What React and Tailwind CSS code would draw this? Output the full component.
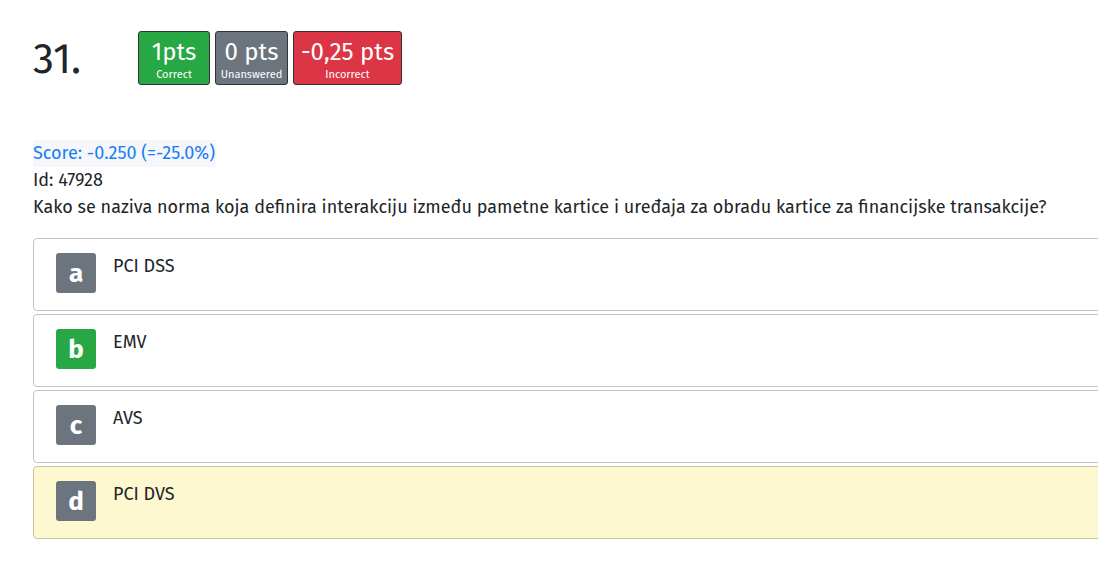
const options = [
  { key: "a", text: "PCI DSS", badge: "bg-[#6c757d]", card: "bg-white border-[#c4c4c4]" },
  { key: "b", text: "EMV", badge: "bg-[#28a745]", card: "bg-white border-[#c4c4c4]" },
  { key: "c", text: "AVS", badge: "bg-[#6c757d]", card: "bg-white border-[#c4c4c4]" },
  { key: "d", text: "PCI DVS", badge: "bg-[#6c757d]", card: "bg-[#fef8d0] border-[#c9c3a0]" },
];

const Pts = ({ value, label, color }) => (
  <div className={`flex flex-col items-center justify-center h-[54px] px-[6px] rounded-[3px] border border-[#333] text-white ${color}`}>
    <div className="text-[24px] leading-[28px] mt-[3px]">{value}</div>
    <div className="text-[11px] leading-[14px] mt-[2px]">{label}</div>
  </div>
);

const App = () => {
  return (
    <div className="w-[1098px] h-[584px] overflow-hidden bg-white text-[#212529] font-['Fira_Sans','Open_Sans',sans-serif]">
      <div className="pl-[33px] pt-[31px]">
        <div className="flex items-start">
          <div className="w-[105px] text-[42px] leading-[56px]">31.</div>
          <div className="flex gap-[5px]">
            <Pts value="1pts" label="Correct" color="bg-[#28a745] w-[72px]" />
            <Pts value="0 pts" label="Unanswered" color="bg-[#6c757d] w-[73px]" />
            <Pts value="-0,25 pts" label="Incorrect" color="bg-[#dc3545] w-[109px]" />
          </div>
        </div>

        <div className="mt-[53px] text-[18px] leading-[27px]">
          <div className="inline-block bg-[#f5f7fa] text-[#1a7cf5] pr-[1px]">Score: -0.250 (=-25.0%)</div>
          <div>Id: 47928</div>
          <div>Kako se naziva norma koja definira interakciju između pametne kartice i uređaja za obradu kartice za financijske transakcije?</div>
        </div>

        <div className="mt-[17px] flex flex-col gap-[3px]">
          {options.map((o) => (
            <div key={o.key} className={`w-[1090px] h-[73px] border rounded-[4px] flex pl-[22px] pt-[14px] ${o.card}`}>
              <div className={`w-[40px] h-[40px] rounded-[3px] text-white flex items-center justify-center text-[26px] font-bold ${o.badge}`}>
                {o.key}
              </div>
              <div className="pl-[17px] text-[18px] leading-[26px]">{o.text}</div>
            </div>
          ))}
        </div>
      </div>
    </div>
  );
};

export default App;
